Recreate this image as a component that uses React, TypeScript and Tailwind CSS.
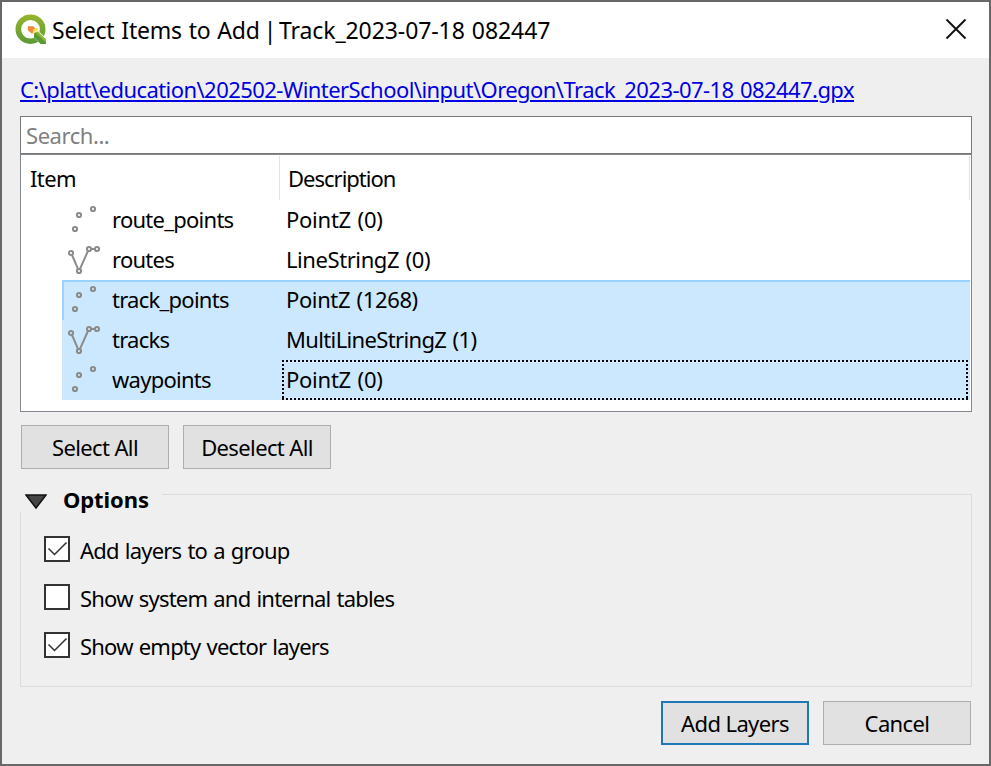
import type { ReactNode } from 'react';

function Logo() {
  return (
    <svg width="32" height="32" viewBox="0 0 32 32" className="shrink-0">
      <defs>
        <linearGradient id="ring" x1="0" y1="0" x2="0" y2="1">
          <stop offset="0" stopColor="#97b52a" />
          <stop offset="1" stopColor="#5a9a36" />
        </linearGradient>
      </defs>
      <path
        fill="url(#ring)"
        fillRule="evenodd"
        d="M15.5 0.5A15 14.7 0 1 0 15.5 29.9A15 14.7 0 1 0 15.5 0.5ZM15.5 6A9.4 9.3 0 1 1 15.5 24.6A9.4 9.3 0 1 1 15.5 6Z"
      />
      <path fill="#fff" d="M17.5 22V17H23.5L32 25V31H26.4Z" />
      <path fill="#5a9a36" d="M19 19L22 18L31 27V30H25.6L19 23.2Z" />
      <path fill="#93b83a" d="M20 18.3L23.2 17.6L31 25.2V28.6Z" />
      <path fill="#f4e04d" d="M17.5 14.5L22.6 13.9V17.6H19.3V21L16.5 18.6Z" />
      <path fill="#ee8a3a" d="M12.8 12.2H18.4L20.4 14.6L18 15.4V18.8L16.6 19.6L12.8 16.2Z" />
    </svg>
  );
}

function Points() {
  return (
    <svg width="32" height="32" viewBox="0 0 32 32" fill="none" stroke="#8b8b89" strokeWidth="2">
      <circle cx="7" cy="25" r="2.1" />
      <circle cx="11" cy="11" r="2.1" />
      <circle cx="25" cy="5" r="2.1" />
    </svg>
  );
}

function Lines() {
  return (
    <svg width="32" height="32" viewBox="0 0 32 32" fill="none" stroke="#8b8b89" strokeWidth="2">
      <path d="M4 11L10 24.8M12 24.8L20 7M23 5H27" />
      <circle cx="3" cy="9" r="2.1" />
      <circle cx="11" cy="27" r="2.1" />
      <circle cx="21" cy="5" r="2.1" />
      <circle cx="29" cy="5" r="2.1" />
    </svg>
  );
}

type RowProps = { icon: ReactNode; name: string; desc: string; fit: string; state?: string; focus?: boolean };

function Row({ icon, name, desc, fit, state = '', focus = false }: RowProps) {
  return (
    <div className={`ml-[41px] mr-px flex h-10 items-start ${state}`}>
      <div className="ml-[6px] mt-1 w-11 shrink-0">{icon}</div>
      <div className="w-[170px] shrink-0 leading-[38px] tracking-[-0.74px]">{name}</div>
      <div className={`relative h-10 flex-1 pl-[4px] leading-[38px] ${fit}`}>
        {desc}
        {focus && (
          <svg className="absolute left-0 top-0" width="686" height="40" fill="none" stroke="#000" strokeWidth="2" strokeDasharray="2 2">
            <path d="M0 1H686M0 39H686M1 0V40M685 0V40" />
          </svg>
        )}
      </div>
    </div>
  );
}

function Button({ children, primary = false }: { children: string; primary?: boolean }) {
  return (
    <button
      className={`h-11 w-[148px] bg-[#e1e1e1] ${primary ? 'border-2 border-[#1f77b8] leading-10' : 'border border-[#adadad] leading-[42px]'}`}
    >
      {children}
    </button>
  );
}

function Check({ label, checked = false }: { label: string; checked?: boolean }) {
  return (
    <div className="flex h-[26px] items-center gap-[10px] tracking-[-0.8px]">
      <span className="block size-[26px] shrink-0 border-2 border-[#333] bg-white">
        {checked && (
          <svg width="22" height="22" viewBox="0 0 22 22" fill="none" stroke="#333" strokeWidth="1.5">
            <path d="M2.5 10.5L8.5 16.5L20.5 4.5" />
          </svg>
        )}
      </span>
      <span className="mt-px">{label}</span>
    </div>
  );
}

export default function App() {
  return (
    <div className="flex h-[766px] w-[991px] flex-col overflow-hidden whitespace-nowrap border-2 border-[#686868] bg-[#efefef] font-['Noto_Sans',sans-serif] text-[22px] leading-7 tracking-[-0.62px] text-black [word-spacing:1.2px]">
      <header className="flex h-14 shrink-0 items-center bg-white pl-[13px] pr-[22px]">
        <Logo />
        <h1 className="ml-[5px] flex-1 text-[23px] tracking-[-0.24px]">
          Select Items to Add<span className="tracking-[-1.8px] [word-spacing:0px]"> | </span>
          <span className="tracking-[-0.08px]">Track_2023-07-18 082447</span>
        </h1>
        <svg className="-mt-[2px]" width="22" height="22" viewBox="0 0 22 22" stroke="#111" strokeWidth="1.9">
          <path d="M1.5 1.5L20.5 20.5M20.5 1.5L1.5 20.5" />
        </svg>
      </header>
      <div className="flex flex-1 flex-col pl-[18px] pr-[17px]">
        <div className="mt-[17px] h-[41px]">
          <a className="tracking-[-0.56px] text-[#0000e0] underline decoration-2 underline-offset-2">
            C:\platt\education\202502-WinterSchool\input\Oregon\Track_2023-07-18 082447.gpx
          </a>
        </div>
        <div className="h-[38px] shrink-0 border border-[#7a7a7a] bg-white pl-[5px] leading-9 tracking-[-0.45px] text-[#808080]">
          <span>Search...</span>
        </div>
        <div className="h-[258px] shrink-0 border border-[#828790] bg-white">
          <div className="mr-px mt-px flex h-11 border-r border-[#e2e2e2] leading-[44px]">
            <div className="w-[259px] border-r border-[#e2e2e2] pl-[9px]">Item</div>
            <div className="pl-2 tracking-[-1px]">Description</div>
          </div>
          <Row icon={<Points />} name="route_points" desc="PointZ (0)" fit="tracking-[-0.25px]" />
          <Row icon={<Lines />} name="routes" desc="LineStringZ (0)" fit="tracking-[-0.42px]" />
          <Row
            icon={<Points />}
            name="track_points"
            desc="PointZ (1268)"
            fit="tracking-[-0.39px]"
            state="bg-[#cce8ff] shadow-[inset_2px_2px_#99d1ff]"
          />
          <Row icon={<Lines />} name="tracks" desc="MultiLineStringZ (1)" fit="tracking-[-0.64px]" state="bg-[#cce8ff]" />
          <Row icon={<Points />} name="waypoints" desc="PointZ (0)" fit="tracking-[-0.25px]" state="bg-[#cce8ff]" focus />
        </div>
        <div className="ml-px mt-[13px] flex gap-[14px]">
          <Button>Select All</Button>
          <Button>Deselect All</Button>
        </div>
        <section className="mt-[18px] h-[200px]">
          <div className="flex h-[25px]">
            <svg className="ml-[5px] mt-[7px]" width="22" height="16" viewBox="0 0 22 16">
              <path d="M1 1H21L11 14Z" fill="#454545" stroke="#111" strokeWidth="1.5" />
            </svg>
            <h2 className="-mt-[2px] ml-4 w-[99px] font-bold tracking-[-0.1px]">Options</h2>
            <div className="mt-[7px] flex-1 border-r border-t border-[#dcdcdc]" />
          </div>
          <div className="flex h-[175px] flex-col gap-[22px] border-x border-b border-[#dcdcdc] pl-[23px] pt-6">
            <Check label="Add layers to a group" checked />
            <Check label="Show system and internal tables" />
            <Check label="Show empty vector layers" checked />
          </div>
        </section>
        <div className="mr-px mt-[14px] flex justify-end gap-[14px]">
          <Button primary>Add Layers</Button>
          <Button>Cancel</Button>
        </div>
      </div>
    </div>
  );
}
